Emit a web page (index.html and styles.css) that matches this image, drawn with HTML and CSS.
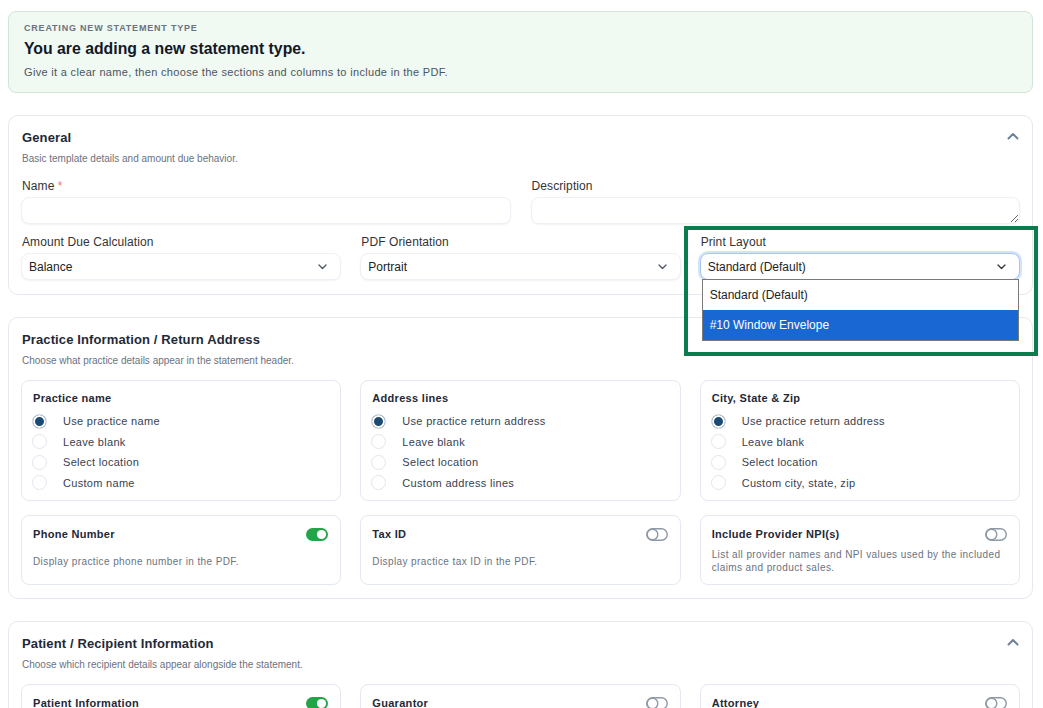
FILE: index.html
```html
<!DOCTYPE html>
<html lang="en">
<head>
<meta charset="utf-8">
<title>New Statement Type</title>
<link rel="stylesheet" href="styles.css">
</head>
<body>
<div class="page">
  <div class="banner">
    <div class="banner-kicker">CREATING NEW STATEMENT TYPE</div>
    <div class="banner-title">You are adding a new statement type.</div>
    <div class="banner-sub">Give it a clear name, then choose the sections and columns to include in the PDF.</div>
  </div>

  <section class="card">
    <div class="card-head">
      <div>
        <h2 class="card-title">General</h2>
        <p class="card-sub">Basic template details and amount due behavior.</p>
      </div>
      <svg class="chev-up" width="12" height="8" viewBox="0 0 12 8"><path d="M1.5 6.5 L6 2 L10.5 6.5" fill="none" stroke="#6f8299" stroke-width="2" stroke-linecap="round" stroke-linejoin="round"/></svg>
    </div>
    <div class="grid2">
      <div class="field">
        <label class="label">Name <span class="req">*</span></label>
        <input class="input" type="text">
      </div>
      <div class="field">
        <label class="label">Description</label>
        <textarea class="input textarea"></textarea>
      </div>
    </div>
    <div class="grid3 grid-fields">
      <div class="field">
        <label class="label">Amount Due Calculation</label>
        <div class="input select"><span>Balance</span><svg width="9" height="6" viewBox="0 0 9 6"><path d="M1 1 L4.5 4.5 L8 1" fill="none" stroke="#4b5563" stroke-width="1.3" stroke-linecap="round" stroke-linejoin="round"/></svg></div>
      </div>
      <div class="field">
        <label class="label">PDF Orientation</label>
        <div class="input select"><span>Portrait</span><svg width="9" height="6" viewBox="0 0 9 6"><path d="M1 1 L4.5 4.5 L8 1" fill="none" stroke="#4b5563" stroke-width="1.3" stroke-linecap="round" stroke-linejoin="round"/></svg></div>
      </div>
      <div class="field field-annot">
        <label class="label">Print Layout</label>
        <div class="input select select-focus"><span>Standard (Default)</span><svg width="9" height="6" viewBox="0 0 9 6"><path d="M1 1 L4.5 4.5 L8 1" fill="none" stroke="#333" stroke-width="1.3" stroke-linecap="round" stroke-linejoin="round"/></svg></div>
        <div class="dropdown">
          <div class="option">Standard (Default)</div>
          <div class="option option-active">#10 Window Envelope</div>
        </div>
        <div class="annot"></div>
      </div>
    </div>
  </section>

  <section class="card">
    <div class="card-head">
      <div>
        <h2 class="card-title">Practice Information / Return Address</h2>
        <p class="card-sub">Choose what practice details appear in the statement header.</p>
      </div>
    </div>
    <div class="grid3 grid-cards">
      <div class="subcard">
        <div class="sub-title">Practice name</div>
        <div class="radios">
          <div class="radio-row"><span class="radio checked"></span>Use practice name</div>
          <div class="radio-row"><span class="radio"></span>Leave blank</div>
          <div class="radio-row"><span class="radio"></span>Select location</div>
          <div class="radio-row"><span class="radio"></span>Custom name</div>
        </div>
      </div>
      <div class="subcard">
        <div class="sub-title">Address lines</div>
        <div class="radios">
          <div class="radio-row"><span class="radio checked"></span>Use practice return address</div>
          <div class="radio-row"><span class="radio"></span>Leave blank</div>
          <div class="radio-row"><span class="radio"></span>Select location</div>
          <div class="radio-row"><span class="radio"></span>Custom address lines</div>
        </div>
      </div>
      <div class="subcard">
        <div class="sub-title">City, State &amp; Zip</div>
        <div class="radios">
          <div class="radio-row"><span class="radio checked"></span>Use practice return address</div>
          <div class="radio-row"><span class="radio"></span>Leave blank</div>
          <div class="radio-row"><span class="radio"></span>Select location</div>
          <div class="radio-row"><span class="radio"></span>Custom city, state, zip</div>
        </div>
      </div>
    </div>
    <div class="grid3 grid-toggles">
      <div class="subcard toggle-card">
        <div class="toggle-head">
          <div class="sub-title">Phone Number</div>
          <svg class="toggle" width="22" height="13" viewBox="0 0 22 13"><rect width="22" height="13" rx="6.5" fill="#22a447"/><circle cx="15.5" cy="6.5" r="4.6" fill="#fff"/></svg>
        </div>
        <div class="toggle-desc"><p>Display practice phone number in the PDF.</p></div>
      </div>
      <div class="subcard toggle-card">
        <div class="toggle-head">
          <div class="sub-title">Tax ID</div>
          <svg class="toggle" width="22" height="13" viewBox="0 0 22 13"><rect x="0.75" y="0.75" width="20.5" height="11.5" rx="5.75" fill="#fff" stroke="#8f99a5" stroke-width="1.4"/><circle cx="6.5" cy="6.5" r="5.3" fill="#fff" stroke="#8f99a5" stroke-width="1.4"/></svg>
        </div>
        <div class="toggle-desc"><p>Display practice tax ID in the PDF.</p></div>
      </div>
      <div class="subcard toggle-card">
        <div class="toggle-head">
          <div class="sub-title">Include Provider NPI(s)</div>
          <svg class="toggle" width="22" height="13" viewBox="0 0 22 13"><rect x="0.75" y="0.75" width="20.5" height="11.5" rx="5.75" fill="#fff" stroke="#8f99a5" stroke-width="1.4"/><circle cx="6.5" cy="6.5" r="5.3" fill="#fff" stroke="#8f99a5" stroke-width="1.4"/></svg>
        </div>
        <div class="toggle-desc"><p>List all provider names and NPI values used by the included claims and product sales.</p></div>
      </div>
    </div>
  </section>

  <section class="card">
    <div class="card-head">
      <div>
        <h2 class="card-title">Patient / Recipient Information</h2>
        <p class="card-sub">Choose which recipient details appear alongside the statement.</p>
      </div>
      <svg class="chev-up" width="12" height="8" viewBox="0 0 12 8"><path d="M1.5 6.5 L6 2 L10.5 6.5" fill="none" stroke="#6f8299" stroke-width="2" stroke-linecap="round" stroke-linejoin="round"/></svg>
    </div>
    <div class="grid3 grid-cards">
      <div class="subcard toggle-card">
        <div class="toggle-head">
          <div class="sub-title">Patient Information</div>
          <svg class="toggle" width="22" height="13" viewBox="0 0 22 13"><rect width="22" height="13" rx="6.5" fill="#22a447"/><circle cx="15.5" cy="6.5" r="4.6" fill="#fff"/></svg>
        </div>
        <div class="toggle-desc"><p>Show the patient name and mailing address.</p></div>
      </div>
      <div class="subcard toggle-card">
        <div class="toggle-head">
          <div class="sub-title">Guarantor</div>
          <svg class="toggle" width="22" height="13" viewBox="0 0 22 13"><rect x="0.75" y="0.75" width="20.5" height="11.5" rx="5.75" fill="#fff" stroke="#8f99a5" stroke-width="1.4"/><circle cx="6.5" cy="6.5" r="5.3" fill="#fff" stroke="#8f99a5" stroke-width="1.4"/></svg>
        </div>
        <div class="toggle-desc"><p>Show the guarantor name and address.</p></div>
      </div>
      <div class="subcard toggle-card">
        <div class="toggle-head">
          <div class="sub-title">Attorney</div>
          <svg class="toggle" width="22" height="13" viewBox="0 0 22 13"><rect x="0.75" y="0.75" width="20.5" height="11.5" rx="5.75" fill="#fff" stroke="#8f99a5" stroke-width="1.4"/><circle cx="6.5" cy="6.5" r="5.3" fill="#fff" stroke="#8f99a5" stroke-width="1.4"/></svg>
        </div>
        <div class="toggle-desc"><p>Show the attorney name and address.</p></div>
      </div>
    </div>
  </section>
</div>
</body>
</html>
```
FILE: styles.css
```css
html {
  overflow: hidden;
}
body {
  margin: 0;
  background: #fff;
  color: #1f2937;
  font-family: "Liberation Sans", Arial, sans-serif;
}
.page {
  padding: 11px 10px 0 8px;
  display: flex;
  flex-direction: column;
  gap: 22px;
}

/* Banner */
.banner {
  background: #f0f9f2;
  border: 1px solid #cfe7d6;
  border-radius: 8px;
  padding: 9px 15px 12px;
}
.banner-kicker {
  font-size: 9px;
  line-height: 14px;
  font-weight: 700;
  letter-spacing: 0.8px;
  color: #6b7280;
}
.banner-title {
  margin-top: 4px;
  font-size: 15.8px;
  line-height: 20px;
  font-weight: 700;
  color: #111827;
}
.banner-sub {
  margin-top: 5px;
  font-size: 11px;
  line-height: 16px;
  letter-spacing: 0.32px;
  color: #4b5563;
}

/* Cards */
.card {
  border: 1px solid #e4e9f0;
  border-radius: 10px;
  padding: 13px 12px 13px;
}
.card-head {
  display: flex;
  justify-content: space-between;
  align-items: flex-start;
  padding-left: 1px;
}
.card-title {
  margin: 0;
  font-size: 13px;
  line-height: 18px;
  font-weight: 700;
  letter-spacing: 0.12px;
  color: #1f2937;
}
.card-sub {
  margin: 4.5px 0 0;
  font-size: 10px;
  line-height: 14px;
  color: #6b7280;
}
.chev-up {
  margin-top: 3px;
  margin-right: 1px;
}

.grid2 {
  display: grid;
  grid-template-columns: 1fr 1fr;
  gap: 20px;
  margin-top: 12.5px;
}
.grid3 {
  display: grid;
  grid-template-columns: repeat(3, 1fr);
  gap: 19px;
}
.grid-fields {
  margin-top: 10px;
  margin-bottom: 1px;
}
.grid-cards {
  margin-top: 12.5px;
}
.grid-toggles {
  margin-top: 14px;
}

.field {
  display: flex;
  flex-direction: column;
}
.field-annot {
  position: relative;
}
.label {
  display: block;
  font-size: 12px;
  line-height: 16px;
  color: #333;
  margin-bottom: 3px;
  padding-left: 1px;
  letter-spacing: 0.1px;
}
.req {
  color: #f07878;
}
.input {
  box-sizing: border-box;
  width: 100%;
  height: 27px;
  margin: 0;
  border: 1px solid #edf0f4;
  border-radius: 8px;
  background: #fff;
  box-shadow: 0 1px 2px rgba(16, 24, 40, 0.05);
  font-family: inherit;
  font-size: 12px;
  outline: none;
}
.textarea {
  display: block;
  resize: vertical;
  padding: 5px 8px;
}
.select {
  display: flex;
  align-items: center;
  justify-content: space-between;
  padding: 0 13px 0 7px;
  color: #222;
}
.select-focus {
  border-color: #a9c6f2;
  box-shadow: 0 0 0 2px #d3e3fb;
}

/* Open dropdown */
.dropdown {
  position: absolute;
  left: 2px;
  top: 45px;
  width: 317px;
  box-sizing: border-box;
  border: 1px solid #7a7a7a;
  background: #fff;
  z-index: 5;
}
.option {
  height: 30px;
  line-height: 30px;
  padding-left: 7px;
  font-size: 12px;
  color: #222;
}
.option-active {
  background: #1967d2;
  color: #fff;
}
.annot {
  position: absolute;
  left: -16px;
  top: -8px;
  width: 354px;
  height: 130px;
  box-sizing: border-box;
  border: 4px solid #0b7c4d;
  z-index: 6;
  pointer-events: none;
}

/* Sub cards */
.subcard {
  border: 1px solid #e4e8f0;
  border-radius: 8px;
  padding: 10px 11px 7px;
}
.sub-title {
  font-size: 11px;
  line-height: 14px;
  font-weight: 700;
  letter-spacing: 0.3px;
  color: #1f2937;
}
.radios {
  margin-top: 6px;
}
.radio-row {
  display: flex;
  align-items: center;
  gap: 16px;
  height: 20.5px;
  font-size: 11px;
  letter-spacing: 0.3px;
  color: #374151;
}
.radio {
  box-sizing: border-box;
  width: 15px;
  height: 15px;
  border-radius: 50%;
  border: 1px solid #e2e6eb;
  background: #fff;
  margin-left: -1px;
  flex: none;
}
.radio.checked {
  background: #1b4a74;
  box-shadow: inset 0 0 0 2px #fff;
}

.toggle-card {
  box-sizing: border-box;
  min-height: 70px;
  padding-top: 11px;
  display: flex;
  flex-direction: column;
}
.toggle-head {
  display: flex;
  justify-content: space-between;
  align-items: center;
  height: 14px;
}
.toggle {
  display: block;
  margin-right: 1px;
}
.toggle-desc {
  flex: 1;
  display: flex;
  align-items: center;
  margin-top: 4px;
}
.toggle-desc p {
  margin: 0;
  font-size: 10px;
  line-height: 13px;
  letter-spacing: 0.4px;
  color: #6b7280;
  padding-right: 6px;
}
```
